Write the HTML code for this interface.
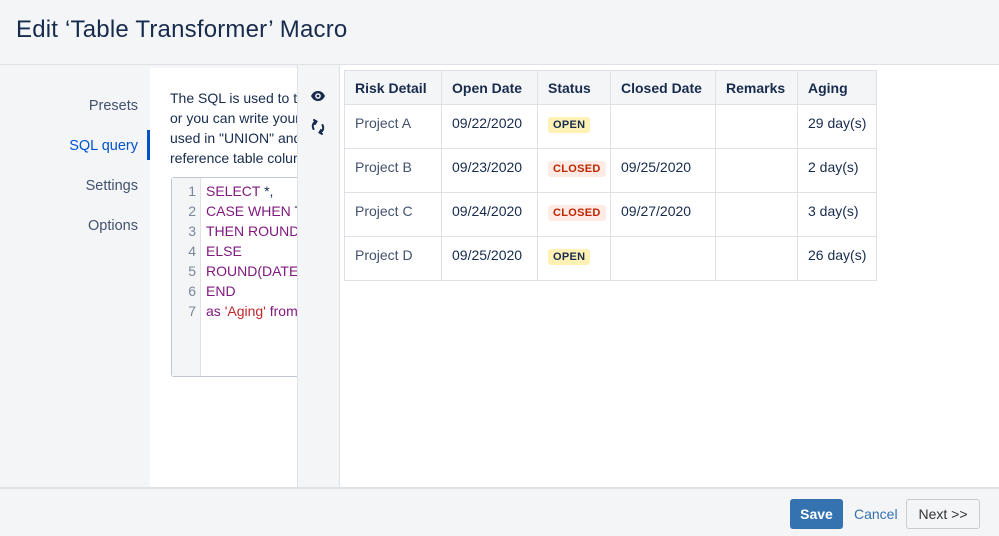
<!DOCTYPE html>
<html><head><style>
*{box-sizing:border-box;margin:0;padding:0}
body{width:999px;height:536px;overflow:hidden;background:#f4f5f7;font-family:"Liberation Sans",sans-serif;color:#172b4d;position:relative;font-size:14px}
.abs{position:absolute}
h1{position:absolute;left:16px;top:16px;font-size:24px;font-weight:normal;color:#172b4d;letter-spacing:0.2px}
.nav{position:absolute;right:0;font-size:14.5px;color:#42526e;text-align:right}
table{border-collapse:collapse;position:absolute;left:344px;top:70px;font-size:14px;table-layout:fixed;width:532px}
td,th{border:1px solid #dfe1e6;text-align:left;vertical-align:top;padding:0 10px;white-space:nowrap}
th{background:#f4f5f7;height:34px;vertical-align:middle;font-weight:bold;color:#172b4d}
td{height:44px;padding-top:10px;color:#172b4d}
td:first-child{color:#42526e}
.lz{display:inline-block;font-size:11px;font-weight:bold;padding:2px 5px;border-radius:3px;margin-top:2px;letter-spacing:0.3px}
.o{background:#fff0b3;color:#172b4d}.c{background:#ffebe6;color:#bf2600}
.code{font-size:14px;line-height:20px}
</style></head><body>
<h1>Edit ‘Table Transformer’ Macro</h1>
<div class="abs" style="left:0;top:64px;width:999px;height:1px;background:#dfe1e6"></div>
<div class="abs" style="left:0;top:65px;width:150px;height:422px">
 <div class="nav" style="right:12px;top:33px">Presets</div>
 <div class="nav" style="right:12px;top:73px;color:#0052cc">SQL query</div>
 <div class="nav" style="right:12px;top:113px">Settings</div>
 <div class="nav" style="right:12px;top:153px">Options</div>
 <div class="abs" style="left:147px;top:65px;width:3px;height:30px;background:#0052cc"></div>
</div>
<div class="abs" style="left:150px;top:68px;width:147px;height:419px;background:#fff;overflow:hidden">
 <div class="abs" style="left:20px;top:20px;width:400px;line-height:20px;font-size:14px;color:#172b4d">The SQL is used to transform<br>or you can write your<br>used in "UNION" and<br>reference table column</div>
 <div class="abs" style="left:21px;top:109px;width:200px;height:200px;border:1px solid #c1c7d0;border-radius:3px;background:#fff">
  <div class="abs code" style="left:0;top:0;width:29px;height:198px;background:#f4f5f7;border-right:1px solid #dfe1e6;text-align:right;padding:3px 4px 0 0;color:#7a869a">1<br>2<br>3<br>4<br>5<br>6<br>7</div>
  <div class="abs code" style="left:34px;top:3px;white-space:nowrap;color:#80197f">SELECT <span style="color:#172b4d">*,</span><br>CASE WHEN <span style="color:#172b4d">T1</span><br>THEN ROUND(<br>ELSE<br>ROUND(DATED<br>END<br>as <span style="color:#c1272d">'Aging'</span> from</div>
 </div>
</div>
<div class="abs" style="left:297px;top:65px;width:43px;height:422px;background:#f4f5f7;border-left:1px solid #dfe1e6;border-right:1px solid #dfe1e6">
 <svg class="abs" style="left:12px;top:24px" width="16" height="14" viewBox="0 0 16 14"><path d="M1 7C3 3 5.5 2 8 2s5 1 7 5c-2 4-4.5 5-7 5S3 11 1 7z" fill="#172b4d"/><circle cx="8" cy="7" r="2.8" fill="#fff"/><circle cx="8" cy="7" r="1.4" fill="#172b4d"/></svg>
 <svg class="abs" style="left:12px;top:53px" width="16" height="18" viewBox="0 0 16 18" fill="none" stroke="#172b4d" stroke-width="2" stroke-linecap="round"><path d="M6 3.5C3 4.5 2 8 3.5 11"/><path d="M10 14.5c3-1 4-4.5 2.5-7.5"/><path d="M4 2l2.5 1.5L5 6"/><path d="M12 16l-2.5-1.5L11 12"/></svg>
</div>
<div class="abs" style="left:340px;top:65px;width:659px;height:422px;background:#fff"></div>
<table>
<colgroup><col style="width:97px"><col style="width:96px"><col style="width:73px"><col style="width:105px"><col style="width:82px"><col style="width:79px"></colgroup>
<tr><th>Risk Detail</th><th>Open Date</th><th>Status</th><th>Closed Date</th><th>Remarks</th><th>Aging</th></tr>
<tr><td>Project A</td><td>09/22/2020</td><td><span class="lz o">OPEN</span></td><td></td><td></td><td>29 day(s)</td></tr>
<tr><td>Project B</td><td>09/23/2020</td><td><span class="lz c">CLOSED</span></td><td>09/25/2020</td><td></td><td>2 day(s)</td></tr>
<tr><td>Project C</td><td>09/24/2020</td><td><span class="lz c">CLOSED</span></td><td>09/27/2020</td><td></td><td>3 day(s)</td></tr>
<tr><td>Project D</td><td>09/25/2020</td><td><span class="lz o">OPEN</span></td><td></td><td></td><td>26 day(s)</td></tr>
</table>
<div class="abs" style="left:0;top:487px;width:999px;height:2px;background:#dfe1e6"></div>
<div class="abs" style="left:790px;top:499px;width:53px;height:30px;background:#3572b0;border-radius:3px;color:#fff;font-weight:bold;font-size:14px;line-height:30px;text-align:center">Save</div>
<div class="abs" style="left:854px;top:499px;line-height:30px;color:#3572b0;font-size:14px">Cancel</div>
<div class="abs" style="left:906px;top:499px;width:74px;height:30px;border:1px solid #ccc;border-radius:3px;background:#f4f5f7;color:#333;line-height:28px;text-align:center;font-size:14px">Next &gt;&gt;</div>
</body></html>
